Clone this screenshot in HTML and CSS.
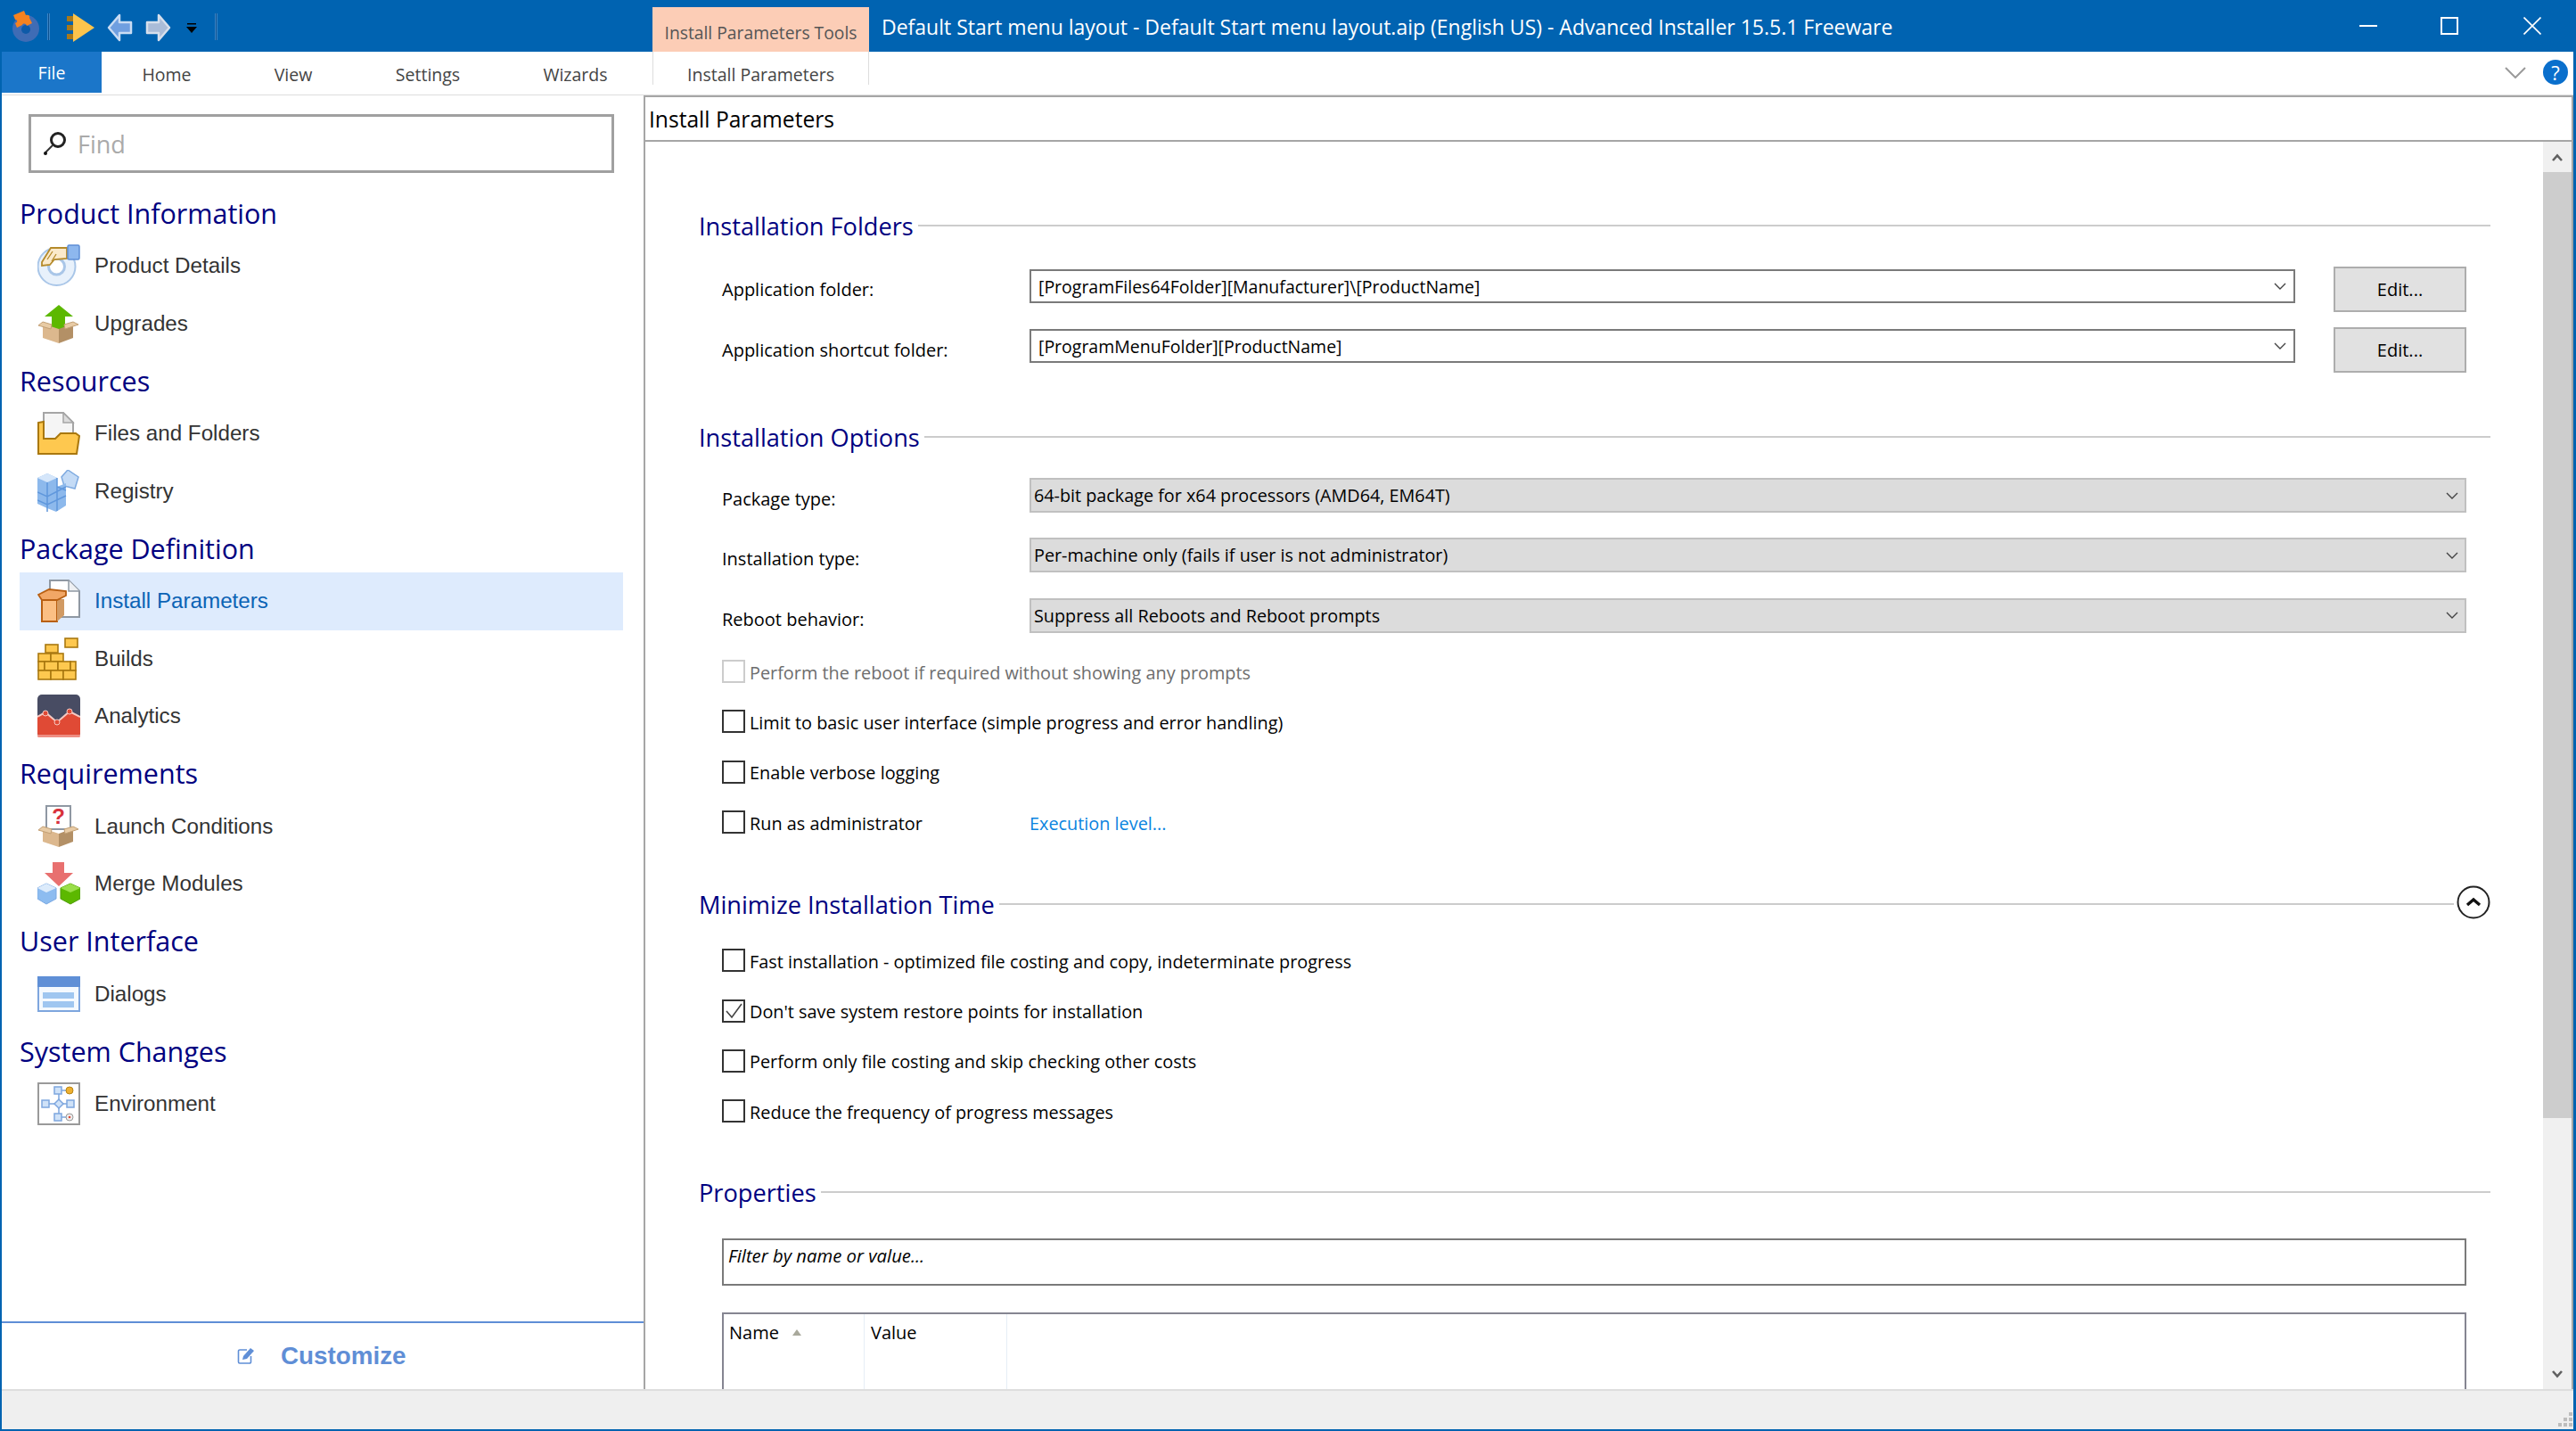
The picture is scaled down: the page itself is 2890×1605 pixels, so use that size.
FILE: index.html
```html
<!DOCTYPE html>
<html lang="en">
<head>
<meta charset="utf-8">
<title>Advanced Installer</title>
<link rel="stylesheet" href="styles.css">
</head>
<body>
<div class="app">
  <header class="titlebar">
    <div class="qat">
      <svg class="qat-logo" width="36" height="38" viewBox="0 0 36 38"><circle cx="19" cy="22" r="15" fill="#3f6cb5"/><circle cx="19" cy="23" r="5" fill="#0e5aa8"/><path d="M5 7l12-5 2 5c3-1 5 1 4 3l3 6-6 3c-1-3-4-3-5-1l-6 3-2-5c3-1 3-4 0-4z" fill="#f58220"/></svg>
      <span class="qat-sep"></span>
      <svg class="qat-play" width="32" height="32" viewBox="0 0 32 32"><rect x="0" y="3" width="8" height="6" fill="#a8781a"/><rect x="0" y="13" width="8" height="6" fill="#a8781a"/><rect x="0" y="23" width="8" height="6" fill="#a8781a"/><path d="M7 0l24 16L7 32z" fill="#fcc44c"/></svg>
      <svg class="qat-arrow" width="30" height="32" viewBox="0 0 30 32"><path d="M14 2L2 16l12 14v-8h13v-12H14z" fill="#6f9fe0" stroke="#c9dcf3" stroke-width="2.5" stroke-linejoin="round"/></svg>
      <svg class="qat-arrow" width="30" height="32" viewBox="0 0 30 32"><path d="M15 2l12 14-12 14v-8H2v-12h13z" fill="#aabcd8" stroke="#d6dfec" stroke-width="2.5" stroke-linejoin="round"/></svg>
      <svg class="qat-drop" width="12" height="12" viewBox="0 0 12 12"><rect x="1" y="0" width="10" height="1.5" fill="#000"/><path d="M0 4h12L6 11z" fill="#000"/></svg>
      <span class="qat-sep qat-sep-last"></span>
    </div>
    <div class="context-tab">Install Parameters Tools</div>
    <div class="window-title">Default Start menu layout - Default Start menu layout.aip (English US) - Advanced Installer 15.5.1 Freeware</div>
    <div class="window-controls">
      <svg class="win-min" width="20" height="20" viewBox="0 0 20 20"><rect x="0" y="9" width="20" height="2" fill="#fff"/></svg>
      <svg width="20" height="20" viewBox="0 0 20 20"><rect x="1" y="1" width="18" height="18" fill="none" stroke="#fff" stroke-width="2"/></svg>
      <svg width="20" height="20" viewBox="0 0 20 20"><path d="M0.5 0.5l19 19M19.5 0.5l-19 19" stroke="#fff" stroke-width="1.6"/></svg>
    </div>
  </header>

  <nav class="ribbon">
    <div class="tab tab-file">File</div>
    <div class="tab tab-home">Home</div>
    <div class="tab tab-view">View</div>
    <div class="tab tab-settings">Settings</div>
    <div class="tab tab-wizards">Wizards</div>
    <div class="tab tab-context">Install Parameters</div>
    <div class="ribbon-right">
      <svg width="24" height="13" viewBox="0 0 24 13"><path d="M1 1l11 11L23 1" fill="none" stroke="#9a9a9a" stroke-width="2"/></svg>
      <div class="help">?</div>
    </div>
  </nav>

  <div class="workspace">
    <aside class="sidebar">
      <div class="sidebar-scroll">
        <div class="find">
          <svg width="28" height="28" viewBox="0 0 28 28"><circle cx="17" cy="10" r="7.5" fill="none" stroke="#222" stroke-width="3"/><path d="M11 16l-8 8" stroke="#333" stroke-width="2"/><circle cx="3" cy="25" r="2" fill="#111"/></svg>
          <span class="find-text">Find</span>
        </div>

        <h2 class="group">Product Information</h2>
        <div class="item">
          <svg class="ico" viewBox="0 0 48 48"><circle cx="21.5" cy="25" r="21" fill="#e8f1fb" stroke="#a9c6e8" stroke-width="2"/><circle cx="21.5" cy="25" r="9" fill="#fff" stroke="#a9c6e8" stroke-width="3"/><path d="M5 20l10-16h18v12l-14 1-5 6-9 1z" fill="#fbeacb" stroke="#b58a2a" stroke-width="1.8"/><path d="M11 17l6-9M16 19l5-8" stroke="#b58a2a" stroke-width="1.3"/><rect x="34" y="1" width="13" height="16" rx="1.5" fill="#8db7ee" stroke="#5d8fd6" stroke-width="1.5"/></svg>
          <span>Product Details</span>
        </div>
        <div class="item">
          <svg class="ico" viewBox="0 0 48 48"><path d="M24 3L8 16h8v14h15V16h9z" fill="#5cb800"/><path d="M6 24l18 6v16L6 40z" fill="#dcb88e"/><path d="M24 30l16-6v16l-16 6z" fill="#b39066"/><path d="M6 22l10 3-1 5-14-4zM40 22l-10 3 1 5 15-5z" fill="#e8cba5" stroke="#c29f74"/></svg>
          <span>Upgrades</span>
        </div>

        <h2 class="group">Resources</h2>
        <div class="item">
          <svg class="ico" viewBox="0 0 48 48"><path d="M7 1h22l11 11v24H7z" fill="#f5f5f5" stroke="#a5a5a5" stroke-width="2"/><path d="M29 1v11h11z" fill="#dcdcdc" stroke="#a5a5a5" stroke-width="1.5"/><path d="M1 47V12l6-1v19h13l6-6h17l4 3-3 20z" fill="#fec84f" stroke="#a9780f" stroke-width="2"/></svg>
          <span>Files and Folders</span>
        </div>
        <div class="item">
          <svg class="ico" viewBox="0 0 48 48"><path d="M34 0l12 8-4 13-12-3-3-10z" fill="#c4dbf6" stroke="#7eaae0" stroke-width="1.5"/><path d="M0 9l11-5 11 5v10l10-4v25l-11 7-10-4-11-5z" fill="#8db9ec"/><path d="M0 9l11 5 11-5-11-5z" fill="#d5e6fa"/><path d="M11 14v33M22 9v37M0 25l11 5 21-11M0 34l11 5 21-10M22 19l10 4" stroke="#5f97dc" stroke-width="1.5" fill="none"/></svg>
          <span>Registry</span>
        </div>

        <h2 class="group">Package Definition</h2>
        <div class="item item-active">
          <svg class="ico" viewBox="0 0 48 48"><path d="M14 1h21l12 12v29H14z" fill="#fff" stroke="#8f98a3" stroke-width="2"/><path d="M35 1v12h12" fill="#eef0f3" stroke="#8f98a3" stroke-width="1.5"/><path d="M5 22h17v25H5z" fill="#fbbf83" stroke="#b85f12" stroke-width="2"/><path d="M22 22h8v18l-8 7z" fill="#d19a63"/><path d="M1 17l12-6 19 2 0 5-10 5-17 0z" fill="#f2a766" stroke="#b85f12" stroke-width="1.8"/></svg>
          <span>Install Parameters</span>
        </div>
        <div class="item">
          <svg class="ico" viewBox="0 0 48 48"><g fill="#fec84f" stroke="#a9780f" stroke-width="1.6"><rect x="31" y="1" width="14" height="10"/><rect x="9" y="8" width="14" height="9"/><rect x="1" y="18" width="14" height="9"/><rect x="15" y="18" width="14" height="9"/><rect x="1" y="27" width="7" height="10"/><rect x="8" y="27" width="15" height="10"/><rect x="23" y="27" width="14" height="10"/><rect x="37" y="27" width="6" height="10"/><rect x="1" y="37" width="14" height="10"/><rect x="15" y="37" width="14" height="10"/><rect x="29" y="37" width="14" height="10"/></g></svg>
          <span>Builds</span>
        </div>
        <div class="item">
          <svg class="ico" viewBox="0 0 48 48"><rect x="0" y="0" width="48" height="48" rx="5" fill="#484c63"/><path d="M0 25l9-5 13 11 14-12 12 6v18a5 5 0 0 1-5 5H5a5 5 0 0 1-5-5z" fill="#e04a35"/><path d="M0 25l9-5 13 11 14-12 12 6" fill="none" stroke="#f6c9c2" stroke-width="2"/><circle cx="9" cy="21" r="3" fill="#e04a35" stroke="#f6c9c2"/><circle cx="22" cy="31" r="3" fill="#e04a35" stroke="#f6c9c2"/><circle cx="36" cy="19" r="3" fill="#e04a35" stroke="#f6c9c2"/><rect x="0" y="45" width="48" height="3" rx="1.5" fill="#ee8d82"/></svg>
          <span>Analytics</span>
        </div>

        <h2 class="group">Requirements</h2>
        <div class="item">
          <svg class="ico" viewBox="0 0 48 48"><rect x="10" y="1" width="27" height="26" fill="#fff" stroke="#8f98a3" stroke-width="2"/><text x="23.5" y="21" class="ico-q">?</text><path d="M6 26l18 6v15L6 41z" fill="#dcb88e"/><path d="M24 32l16-6v15l-16 6z" fill="#b39066"/><path d="M6 24l10 3-1 5-14-4zM40 24l-10 3 1 5 15-5z" fill="#e8cba5" stroke="#c29f74"/></svg>
          <span>Launch Conditions</span>
        </div>
        <div class="item">
          <svg class="ico" viewBox="0 0 48 48"><path d="M17 0h13v12h10L24 27 8 12h9z" fill="#e8706f"/><path d="M0 29l10-5 11 5v12l-11 6-10-6z" fill="#8dbcf0" stroke="#7aa9e3"/><path d="M0 29l10 5 11-5-11-5z" fill="#dcebfb"/><path d="M26 29l11-5 11 5v12l-11 6-11-6z" fill="#5cb800" stroke="#4d9c00"/><path d="M26 29l11 5 11-5-11-5z" fill="#9ade4a"/></svg>
          <span>Merge Modules</span>
        </div>

        <h2 class="group">User Interface</h2>
        <div class="item">
          <svg class="ico" viewBox="0 0 48 48"><rect x="1" y="5" width="46" height="38" fill="#f4f9fe" stroke="#7ea6de" stroke-width="2"/><rect x="0" y="4" width="48" height="12" fill="#5f8fd6"/><rect x="6" y="22" width="35" height="7" fill="#9fc6f0"/><rect x="6" y="32" width="35" height="7" fill="#9fc6f0"/></svg>
          <span>Dialogs</span>
        </div>

        <h2 class="group">System Changes</h2>
        <div class="item">
          <svg class="ico" viewBox="0 0 48 48"><rect x="1" y="1" width="46" height="46" fill="#fff" stroke="#9a9a9a" stroke-width="2"/><path d="M24 12v24M11 24h27M24 9h12M24 39h12" stroke="#7ea6de" stroke-width="1.5"/><g fill="#cfe2f8" stroke="#7ea6de" stroke-width="1.5"><rect x="19" y="5" width="8" height="8"/><rect x="5" y="20" width="8" height="8"/><rect x="33" y="20" width="8" height="8"/><rect x="19" y="35" width="8" height="8"/><path d="M24 19l5 5-5 5-5-5z"/></g><circle cx="36" cy="9" r="4" fill="#eeb02f" stroke="#b88414"/><circle cx="36" cy="39" r="4" fill="#eee" stroke="#999"/><circle cx="36" cy="39" r="1.3" fill="#e04a35"/></svg>
          <span>Environment</span>
        </div>
      </div>
      <div class="customize">
        <svg width="20" height="20" viewBox="0 0 20 20"><path d="M11 3H3a1.5 1.5 0 0 0-1.5 1.5v12A1.5 1.5 0 0 0 3 18h11a1.5 1.5 0 0 0 1.5-1.5V10" fill="none" stroke="#5f8ed6" stroke-width="1.6"/><path d="M7 10l8-9 4 3-8 9-5 1z" fill="#5f8ed6"/></svg>
        <span class="customize-text">Customize</span>
      </div>
    </aside>

    <main class="main">
      <div class="main-header">Install Parameters</div>
      <div class="main-body">
        <div class="content">
          <section class="section section-folders">
            <div class="section-head"><h3>Installation Folders</h3><span class="rule"></span></div>
            <div class="field-row field-row-first">
              <label class="field-label">Application folder:</label>
              <div class="input-combo"><span>[ProgramFiles64Folder][Manufacturer]\[ProductName]</span><svg width="14" height="8" viewBox="0 0 14 8"><path d="M1 1l6 6 6-6" fill="none" stroke="#444" stroke-width="1.4"/></svg></div>
              <button class="edit-btn">Edit...</button>
            </div>
            <div class="field-row">
              <label class="field-label">Application shortcut folder:</label>
              <div class="input-combo"><span>[ProgramMenuFolder][ProductName]</span><svg width="14" height="8" viewBox="0 0 14 8"><path d="M1 1l6 6 6-6" fill="none" stroke="#444" stroke-width="1.4"/></svg></div>
              <button class="edit-btn">Edit...</button>
            </div>
          </section>

          <section class="section section-options">
            <div class="section-head"><h3>Installation Options</h3><span class="rule"></span></div>
            <div class="select-list">
              <div class="select-row"><label class="field-label">Package type:</label><div class="select-box"><span>64-bit package for x64 processors (AMD64, EM64T)</span><svg width="14" height="8" viewBox="0 0 14 8"><path d="M1 1l6 6 6-6" fill="none" stroke="#444" stroke-width="1.4"/></svg></div></div>
              <div class="select-row"><label class="field-label">Installation type:</label><div class="select-box"><span>Per-machine only (fails if user is not administrator)</span><svg width="14" height="8" viewBox="0 0 14 8"><path d="M1 1l6 6 6-6" fill="none" stroke="#444" stroke-width="1.4"/></svg></div></div>
              <div class="select-row"><label class="field-label">Reboot behavior:</label><div class="select-box"><span>Suppress all Reboots and Reboot prompts</span><svg width="14" height="8" viewBox="0 0 14 8"><path d="M1 1l6 6 6-6" fill="none" stroke="#444" stroke-width="1.4"/></svg></div></div>
            </div>
            <div class="check-list check-list-options">
              <div class="check-row check-disabled"><span class="check"></span><span class="check-text">Perform the reboot if required without showing any prompts</span></div>
              <div class="check-row"><span class="check"></span><span class="check-text">Limit to basic user interface (simple progress and error handling)</span></div>
              <div class="check-row"><span class="check"></span><span class="check-text">Enable verbose logging</span></div>
              <div class="check-row"><div class="check-group"><span class="check"></span><span class="check-text">Run as administrator</span></div><a class="link check-text">Execution level...</a></div>
            </div>
          </section>

          <section class="section section-minimize">
            <div class="section-head"><h3>Minimize Installation Time</h3><span class="rule"></span>
              <svg class="collapse" width="38" height="38" viewBox="0 0 38 38"><circle cx="19" cy="19" r="17.5" fill="#fff" stroke="#222" stroke-width="2"/><path d="M12 22l7-6 7 6" fill="none" stroke="#111" stroke-width="3.4"/></svg>
            </div>
            <div class="check-list check-list-minimize">
              <div class="check-row"><span class="check"></span><span class="check-text">Fast installation - optimized file costing and copy, indeterminate progress</span></div>
              <div class="check-row"><span class="check"><svg width="20" height="20" viewBox="0 0 20 20"><path d="M2 10l6 7L19 2" fill="none" stroke="#444" stroke-width="1.6"/></svg></span><span class="check-text">Don't save system restore points for installation</span></div>
              <div class="check-row"><span class="check"></span><span class="check-text">Perform only file costing and skip checking other costs</span></div>
              <div class="check-row"><span class="check"></span><span class="check-text">Reduce the frequency of progress messages</span></div>
            </div>
          </section>

          <section class="section section-properties">
            <div class="section-head"><h3>Properties</h3><span class="rule"></span></div>
            <div class="filter-box">Filter by name or value...</div>
            <div class="prop-table">
              <div class="prop-col prop-col-name">Name<svg width="10" height="7" viewBox="0 0 10 7"><path d="M0 7l5-7 5 7z" fill="#a9a99c"/></svg></div>
              <div class="prop-col prop-col-value">Value</div>
            </div>
          </section>
        </div>
        <div class="scrollbar">
          <div class="scroll-btn"><svg width="12" height="9" viewBox="0 0 12 9"><path d="M1 8l5-5.5L11 8" fill="none" stroke="#606060" stroke-width="2.6"/></svg></div>
          <div class="scroll-thumb"></div>
          <div class="scroll-track"></div>
          <div class="scroll-btn"><svg width="12" height="9" viewBox="0 0 12 9"><path d="M1 1l5 5.5L11 1" fill="none" stroke="#606060" stroke-width="2.6"/></svg></div>
        </div>
      </div>
    </main>
  </div>

  <footer class="statusbar">
    <svg width="18" height="18" viewBox="0 0 18 18"><g fill="#bdbdbd"><rect x="13" y="1" width="4" height="4"/><rect x="7" y="7" width="4" height="4"/><rect x="13" y="7" width="4" height="4"/><rect x="1" y="13" width="4" height="4"/><rect x="7" y="13" width="4" height="4"/><rect x="13" y="13" width="4" height="4"/></g></svg>
  </footer>
</div>
</body>
</html>
```
FILE: styles.css
```css
* { box-sizing: border-box; }
html, body { margin: 0; padding: 0; }
body { background: #0063b1; font-family: "Open Sans", "Liberation Sans", sans-serif; color: #000; }
.app { width: 2890px; height: 1605px; display: flex; flex-direction: column; overflow: hidden; background: #fff; border-left: 2px solid #0063b1; border-right: 3px solid #0063b1; border-bottom: 2px solid #0063b1; }

/* title bar */
.titlebar { height: 58px; flex: none; background: #0063b1; display: flex; align-items: flex-start; }
.qat { width: 730px; height: 58px; flex: none; display: flex; align-items: center; }
.qat-logo { margin-left: 8px; margin-top: 0; }
.qat-sep { width: 3px; height: 30px; margin-left: 7px; background: #0a4f8f; border: 1px solid #3d86c6; border-width: 0 1px; margin-top: 2px; }
.qat-play { margin-left: 19px; margin-top: 4px; }
.qat-arrow { margin-left: 13px; margin-top: 4px; }
.qat-drop { margin-left: 16px; margin-top: 6px; }
.qat-sep-last { margin-left: 20px; }
.context-tab { width: 243px; height: 50px; margin-top: 8px; flex: none; background: #fccdb6; color: #555; font-size: 19.3px; text-align: center; line-height: 57px; }
.window-title { margin-left: 14px; color: #fff; font-size: 23px; line-height: 61px; white-space: nowrap; }
.window-controls { margin-left: auto; margin-right: 36px; margin-top: 19px; display: flex; gap: 73px; }
.win-min { margin-right: -2px; }

/* ribbon */
.ribbon { height: 49px; flex: none; display: flex; align-items: flex-start; border-bottom: 1px solid #ddd; font-size: 19.5px; color: #444; }
.tab { text-align: center; height: 46px; line-height: 51px; flex: none; }
.tab-file { width: 112px; background: #1b76c9; color: #fff; line-height: 48px; }
.tab-home { width: 146px; }
.tab-view { width: 138px; }
.tab-settings { width: 164px; }
.tab-wizards { width: 167px; }
.tab-context { width: 243px; height: 37px; margin-left: 3px; line-height: 51px; border-left: 1px solid #ddd; border-right: 1px solid #ddd; }
.ribbon-right { margin-left: auto; margin-right: 6px; display: flex; align-items: center; gap: 19px; height: 46px; }
.help { width: 28px; height: 28px; border-radius: 50%; background: #0a6fcc; color: #fff; font-size: 22px; line-height: 28px; text-align: center; }

/* workspace */
.workspace { height: 1451px; flex: none; display: flex; }
.sidebar { width: 720px; flex: none; display: flex; flex-direction: column; }
.sidebar-scroll { flex: 1; padding: 21px 20px 0 20px; min-height: 0; }
.find { width: 657px; height: 66px; margin-left: 10px; margin-bottom: 13px; border: 3px solid #a0a0a0; display: flex; align-items: center; padding-left: 13px; color: #aaa; font-size: 27px; }
.find-text { margin-left: 11px; }
.group { margin: 0; height: 59.2px; font-weight: 400; font-size: 30.5px; line-height: 65px; color: #000080; white-space: nowrap; }
.item { width: 677px; height: 64.4px; padding-left: 20px; display: flex; align-items: center; gap: 16px; font-family: "Liberation Sans", sans-serif; font-size: 24.2px; color: #333; }
.item-active { background: #deebfd; color: #0b63b5; }
.ico { width: 48px; height: 48px; flex: none; }
.ico-q { font-family: "Liberation Sans", sans-serif; font-weight: 700; font-size: 24px; fill: #d8323c; text-anchor: middle; }
.customize { height: 76px; flex: none; border-top: 2px solid #5f8ed6; display: flex; align-items: center; padding-left: 264px; }
.customize-text { margin-left: 29px; font-family: "Liberation Sans", sans-serif; font-weight: 700; font-size: 27.8px; color: #5f8ed6; }

/* main */
.main { flex: 1; min-width: 0; display: flex; flex-direction: column; border-left: 2px solid #a6a6a6; border-top: 2px solid #a6a6a6; border-right: 2px solid #a6a6a6; }
.main-header { height: 50px; flex: none; border-bottom: 2px solid #a6a6a6; font-size: 24.6px; line-height: 50px; padding-left: 4px; color: #000; }
.main-body { flex: 1; min-height: 0; display: flex; }
.content { flex: 1; min-width: 0; overflow: hidden; padding: 0 59px 0 60px; }
.section-folders { margin-top: 74px; }
.section-options { margin-top: 35px; }
.section-minimize { margin-top: 44px; }
.section-properties { margin-top: 43px; }
.section-head { height: 40px; display: flex; align-items: center; }
.section-head h3 { margin: 0; font-weight: 400; font-size: 27.2px; line-height: 40px; color: #000080; white-space: nowrap; position: relative; top: 1px; }
.rule { flex: 1; height: 2px; margin-left: 5px; background: #ccc; }
.collapse { margin-left: 3px; flex: none; position: relative; top: -2px; }

.field-label { flex: none; width: 345px; padding-top: 12px; font-size: 20px; color: #000; }
.field-row { display: flex; height: 68px; align-items: flex-start; padding-left: 26px; }
.field-row-first { margin-top: 26px; }
.field-row .input-combo { margin-top: 2px; }
.field-row-first .input-combo { margin-top: 3px; }
.input-combo { width: 1420px; height: 38px; flex: none; border: 2px solid #7a7a7a; display: flex; align-items: center; justify-content: space-between; padding: 0 8px 0 8px; font-size: 19.5px; }
.edit-btn { width: 149px; height: 51px; flex: none; margin-left: 43px; background: #e1e1e1; border: 2px solid #adadad; font-family: inherit; font-size: 20px; color: #000; padding: 0; }

.select-list { margin-top: 26px; padding-left: 26px; display: flex; flex-direction: column; gap: 28.3px; }
.select-row { display: flex; height: 39px; }
.select-row .field-label { padding-top: 10px; }
.select-box { width: 1612px; height: 39px; flex: none; background: #dcdcdc; border: 2px solid #c0c0c0; display: flex; align-items: center; justify-content: space-between; padding: 0 7px 0 3px; font-size: 19.8px; }

.check-list { padding-left: 26px; }
.check-list-options { margin-top: 15.4px; }
.check-list-minimize { margin-top: 15px; }
.check-row { height: 56.3px; display: flex; align-items: center; font-size: 19.85px; white-space: nowrap; }
.check-text { padding-top: 2px; }
.check-group { width: 345px; flex: none; display: flex; align-items: center; }
.check { width: 26px; height: 26px; flex: none; margin-right: 5px; border: 2.5px solid #333; display: flex; align-items: center; justify-content: center; background: #fff; }
.check-disabled { color: #6d6d6d; }
.check-disabled .check { border-color: #ccc; }
.link { color: #0a84e0; }

.filter-box { margin: 32px 0 0 26px; width: 1957px; height: 53px; border: 2px solid #7a7a7a; padding: 3px 0 0 5px; font-size: 20.3px; font-style: italic; }
.prop-table { margin: 30px 0 0 26px; width: 1957px; height: 120px; border: 2px solid #858591; border-bottom: 0; display: flex; font-size: 20px; }
.prop-col { height: 120px; padding: 7px 0 0 6px; border-right: 1px solid #e6eef6; }
.prop-col-name { width: 158px; }
.prop-col-name svg { margin-left: 15px; vertical-align: 4px; }
.prop-col-value { width: 160px; padding-left: 7px; }

.scrollbar { width: 32px; flex: none; display: flex; flex-direction: column; background: #f0f0f0; }
.scroll-btn { height: 34px; flex: none; display: flex; align-items: center; justify-content: center; }
.scroll-thumb { height: 1061px; flex: none; background: #cdcdcd; }
.scroll-track { flex: 1; }

/* status bar */
.statusbar { flex: 1; background: #efefef; border-top: 2px solid #ddd; display: flex; align-items: flex-end; justify-content: flex-end; padding-right: 0; padding-bottom: 2px; }
```
